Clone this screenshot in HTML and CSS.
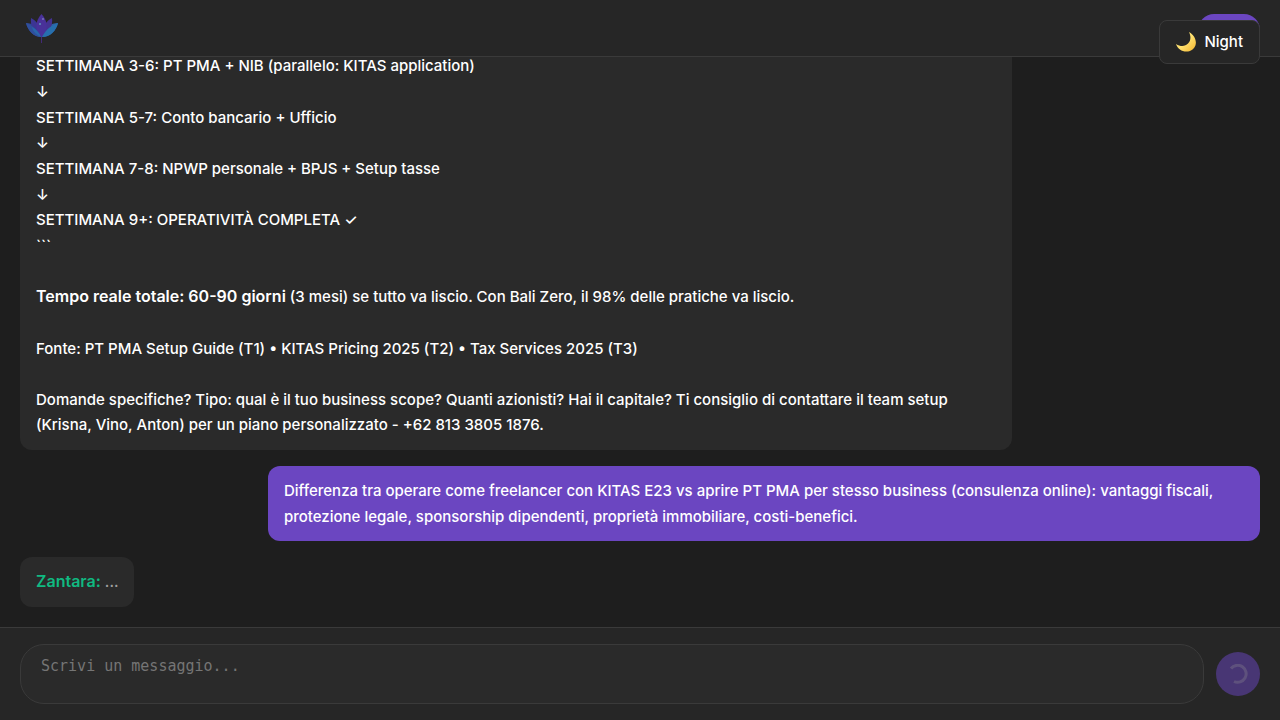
FILE: index.html
```html
<!DOCTYPE html>
<html lang="it">
<head>
<meta charset="utf-8">
<meta name="viewport" content="width=device-width, initial-scale=1">
<title>Zantara</title>
<link rel="stylesheet" href="styles.css">
</head>
<body>
<div class="app">
  <header class="header">
    <svg class="logo" viewBox="0 0 36 32" aria-hidden="true">
      <path d="M17.500 20V30" stroke="#432a78" stroke-width="1"/>
      <path d="M17.500 24C10 24 4 18 2 10C9 10 15 14 17.500 24Z" fill="#2e4791"/>
      <path d="M18 24C26 24 32 18 34 10C27 10 21 14 18 24Z" fill="#2f62a5"/>
      <path d="M17 24C9 19 6 12 7 5C13 8 17 14 17 24Z" fill="#3c3594"/>
      <path d="M18 24C26 19 29 12 28 5C22 8 18 14 18 24Z" fill="#453291"/>
      <path d="M17.500 24C10 18 11 8 17.500 1C24 8 25 18 17.500 24Z" fill="#493199"/>
      <path d="M17 24C10 24 4 18 2 10C8 12 13 16 17 24Z" fill="#2f4f9c"/>
      <path d="M18 24C26 24 32 18 34 10C28 12 22 16 18 24Z" fill="#276fad"/>
      <path d="M17 24C13 22 9 19 8 14C12 16 15 19 17 24Z" fill="#2866aa"/>
      <circle cx="19" cy="6" r="1" fill="#7770bd"/>
      <circle cx="16" cy="11" r="1" fill="#5c96b8"/>
    </svg>
    <button class="login" type="button" aria-label="Menu"></button>
  </header>
  <button class="theme" type="button">
    <svg class="moon" viewBox="0 0 20 20" aria-hidden="true">
      <defs><linearGradient id="moon" x1="0" y1="0" x2="1" y2="1"><stop offset="0.500" stop-color="#ffe170"/><stop offset="1" stop-color="#f2b32c"/></linearGradient></defs>
      <path d="M13 0C22 5 22 16 14 19C8 21 2 18 0 12C9 18 18 10 13 0Z" fill="url(#moon)"/>
    </svg>
    <span>Night</span>
  </button>
  <main class="messages">
    <article class="message assistant">SETTIMANA 3-6: PT PMA + NIB (parallelo: KITAS application)
↓
SETTIMANA 5-7: Conto bancario + Ufficio
↓
SETTIMANA 7-8: NPWP personale + BPJS + Setup tasse
↓
SETTIMANA 9+: OPERATIVITÀ COMPLETA ✓
&#96;&#96;&#96;

<strong>Tempo reale totale: 60-90 giorni</strong> (3 mesi) se tutto va liscio. Con Bali Zero, il 98% delle pratiche va liscio.

Fonte: PT PMA Setup Guide (T1) • KITAS Pricing 2025 (T2) • Tax Services 2025 (T3)

Domande specifiche? Tipo: qual è il tuo business scope? Quanti azionisti? Hai il capitale? Ti consiglio di contattare il team setup (Krisna, Vino, Anton) per un piano personalizzato - +62 813 3805 1876.</article>
    <article class="message user">Differenza tra operare come freelancer con KITAS E23 vs aprire PT PMA per stesso business (consulenza online): vantaggi fiscali, protezione legale, sponsorship dipendenti, proprietà immobiliare, costi-benefici.</article>
    <article class="message assistant"><strong class="name">Zantara:</strong> <span class="typing">...</span></article>
  </main>
  <form class="composer">
    <textarea class="input" placeholder="Scrivi un messaggio..." aria-label="Messaggio"></textarea>
    <button class="send" type="button" aria-label="Invio in corso" disabled>
      <svg class="spinner" viewBox="0 0 20 20" aria-hidden="true"><path d="M3 4.500A8.500 8.500 0 1 1 6 17.500" fill="none" stroke="#fff" stroke-opacity="0.300" stroke-width="3"/></svg>
    </button>
  </form>
</div>
</body>
</html>
```
FILE: styles.css
```css
* { box-sizing: border-box; }
body {
  margin: 0;
  background: #1e1e1e;
  color: #fff;
  font-family: Inter, "Liberation Sans", "DejaVu Sans", sans-serif;
  font-size: 15px;
  font-weight: 500;
  line-height: 1.71;
}
button { font: inherit; color: inherit; }
.app { position: relative; height: 100vh; display: flex; flex-direction: column; }
.header {
  flex: none;
  display: flex;
  align-items: flex-start;
  justify-content: space-between;
  height: 57px;
  padding: 13px 20px 0 24px;
  background: #262626;
  border-bottom: 1px solid #3a3a3a;
}
.logo { width: 36px; height: 32px; }
.login { width: 62px; height: 32px; margin-top: 1px; border: 0; border-radius: 16px; background: #6b46c1; }
.theme {
  position: absolute;
  top: 20px;
  right: 20px;
  display: flex;
  align-items: center;
  gap: 8px;
  height: 44px;
  padding: 0 16px;
  background: #262626;
  border: 1px solid #3a3a3a;
  border-radius: 8px;
}
.moon { width: 20px; height: 20px; }
.messages {
  flex: 1;
  min-height: 0;
  overflow: hidden;
  display: flex;
  flex-direction: column;
  justify-content: flex-end;
  gap: 16px;
  padding: 0 20px 20px;
}
.message {
  flex: none;
  max-width: 80%;
  padding: 12px 16px;
  border-radius: 12px;
  white-space: pre-wrap;
}
.message strong { font-size: 16px; font-weight: 600; line-height: 1; }
.assistant { align-self: flex-start; background: #2a2a2a; }
.user { align-self: flex-end; background: #6b46c1; }
.name { color: #10b981; }
.typing { color: #a0a0a0; }
.composer {
  flex: none;
  display: flex;
  align-items: center;
  gap: 12px;
  padding: 16px 20px;
  background: #262626;
  border-top: 1px solid #3a3a3a;
}
.input {
  flex: 1;
  height: 60px;
  padding: 12px 20px;
  border: 1px solid #3a3a3a;
  border-radius: 24px;
  background: #2a2a2a;
  color: #fff;
  font-family: "DejaVu Sans Mono", monospace;
  font-size: 15px;
  line-height: normal;
  resize: none;
}
.input::placeholder { color: #757575; }
.send {
  display: grid;
  place-items: center;
  width: 44px;
  height: 44px;
  padding: 0;
  border: 0;
  border-radius: 50%;
  background: #6b46c1;
  opacity: 0.5;
}
.spinner { width: 20px; height: 20px; }
```
